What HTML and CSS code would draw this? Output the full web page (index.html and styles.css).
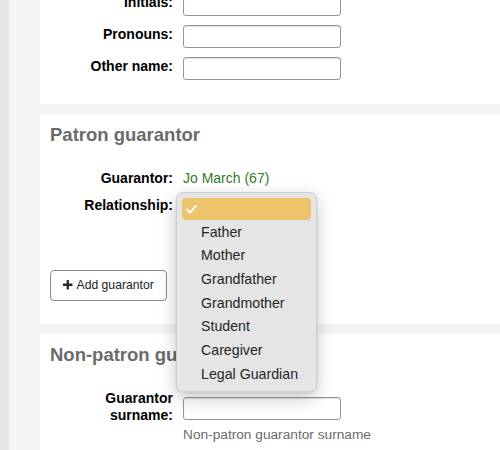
FILE: index.html
```html
<!DOCTYPE html>
<html lang="en">
<head>
<meta charset="utf-8">
<title>Guarantor</title>
<link rel="stylesheet" href="styles.css">
</head>
<body>
<div class="page">
  <div class="sidebar"></div>
  <main class="main">
    <section class="panel panel-first">
      <div class="row"><label class="label">Initials:</label><input class="input" type="text"></div>
      <div class="row"><label class="label">Pronouns:</label><input class="input" type="text"></div>
      <div class="row"><label class="label">Other name:</label><input class="input" type="text"></div>
    </section>

    <section class="panel panel-guarantor">
      <h2 class="heading">Patron guarantor</h2>
      <div class="row text-row"><span class="label">Guarantor:</span><a class="link" href="#">Jo March (67)</a></div>
      <div class="row rel-row"><span class="label">Relationship:</span><span class="select-slot"></span></div>
      <button class="btn" type="button">
        <svg class="plus" viewBox="0 0 10 10" width="9.5" height="9.5"><path d="M3.8 0h2.4v3.8H10v2.4H6.2V10H3.8V6.2H0V3.8h3.8z" fill="#2b2b2b"/></svg>
        <span class="btn-text">Add guarantor</span>
      </button>
    </section>

    <section class="panel panel-nonpatron">
      <h2 class="heading">Non-patron guarantor</h2>
      <div class="row two-line"><label class="label">Guarantor surname:</label><input class="input" type="text"></div>
      <div class="hint">Non-patron guarantor surname</div>
    </section>
  </main>

  <ul class="menu">
    <li class="item selected">
      <svg class="check" viewBox="0 0 11 9" width="11" height="9"><polyline points="1.2,4.8 4,7.6 9.8,1.2" fill="none" stroke="#fff" stroke-width="2" stroke-linecap="round" stroke-linejoin="round"/></svg>
    </li>
    <li class="item">Father</li>
    <li class="item">Mother</li>
    <li class="item">Grandfather</li>
    <li class="item">Grandmother</li>
    <li class="item">Student</li>
    <li class="item">Caregiver</li>
    <li class="item">Legal Guardian</li>
  </ul>
</div>
</body>
</html>
```

FILE: styles.css
```css
* { box-sizing: border-box; }

html, body {
  margin: 0;
  padding: 0;
  width: 500px;
  height: 450px;
  overflow: hidden;
  background: #f3f4f4;
  font-family: "Liberation Sans", Arial, sans-serif;
  color: #000;
}

.page {
  position: relative;
  display: flex;
  width: 500px;
  height: 450px;
  overflow: hidden;
}

.sidebar {
  width: 9px;
  flex: 0 0 9px;
  background: #e7e7e7;
}

.main {
  flex: 1;
  padding-left: 31px;
  display: flex;
  flex-direction: column;
  gap: 10px;
}

.panel {
  background: #fff;
  padding: 10px 0 0 10px;
}

.panel-first {
  margin-top: -7px;
  padding: 0 0 24px 10px;
  display: flex;
  flex-direction: column;
  gap: 9px;
}

.panel-guarantor {
  padding-bottom: 23.5px;
}

.panel-nonpatron {
  flex: 1;
}

.heading {
  margin: 0 0 24px;
  font-size: 18.5px;
  line-height: 21.6px;
  font-weight: bold;
  color: #6b6b6b;
}

.row {
  display: flex;
  align-items: flex-start;
  gap: 10px;
}

.label {
  width: 123px;
  flex: 0 0 123px;
  padding-top: 1px;
  text-align: right;
  font-weight: bold;
  font-size: 14px;
  line-height: 17px;
  color: #000;
}

.input {
  width: 158px;
  height: 23px;
  margin: 0;
  border: 1px solid #959595;
  border-radius: 3px;
  background: #fff;
  box-shadow: inset 0 1px 1px rgba(0, 0, 0, 0.12);
  font: 14px "Liberation Sans", Arial, sans-serif;
}

.text-row {
  margin-bottom: 10px;
}

.text-row .label { padding-top: 0; }

.link {
  font-size: 14px;
  line-height: 17px;
  color: #367a26;
  text-decoration: none;
}

.rel-row {
  height: 23px;
  margin-bottom: 50px;
}

.rel-row .label { padding-top: 0; }

.select-slot {
  width: 120px;
  height: 22px;
}

.btn {
  display: inline-flex;
  align-items: center;
  align-self: flex-start;
  gap: 4px;
  height: 31px;
  padding: 0 10px 0 12px;
  width: 117px;
  border: 1px solid #8a8a8a;
  border-radius: 4px;
  background: #fff;
  font: 12.2px "Liberation Sans", Arial, sans-serif;
  color: #222;
  white-space: nowrap;
  cursor: pointer;
}

.btn-text { white-space: nowrap; }

.plus { flex: 0 0 9.5px; }

.two-line .label { padding-top: 0; }

.two-line .input {
  margin-top: 7px;
}

.hint {
  margin: 2px 0 0 133px;
  font-size: 13.7px;
  line-height: 17px;
  color: #6a6a6a;
}

/* native-style popup menu overlaying the relationship select */
.menu {
  position: absolute;
  left: 175.5px;
  top: 191.5px;
  width: 141px;
  margin: 0;
  padding: 5px 5px 5.5px;
  list-style: none;
  background: #e4e5e4;
  border: 1px solid #cfcfcf;
  border-radius: 7px;
  box-shadow: 0 6px 18px rgba(0, 0, 0, 0.22), 0 1px 3px rgba(0, 0, 0, 0.08);
}

.item {
  height: 23.7px;
  padding: 1px 0 0 19.5px;
  font-size: 14.2px;
  line-height: 22.7px;
  color: #262626;
  white-space: nowrap;
}

.item.selected {
  position: relative;
  height: 22px;
  background: #edc46b;
  border-radius: 4px;
}

.check {
  position: absolute;
  left: 4px;
  top: 7px;
}
```
